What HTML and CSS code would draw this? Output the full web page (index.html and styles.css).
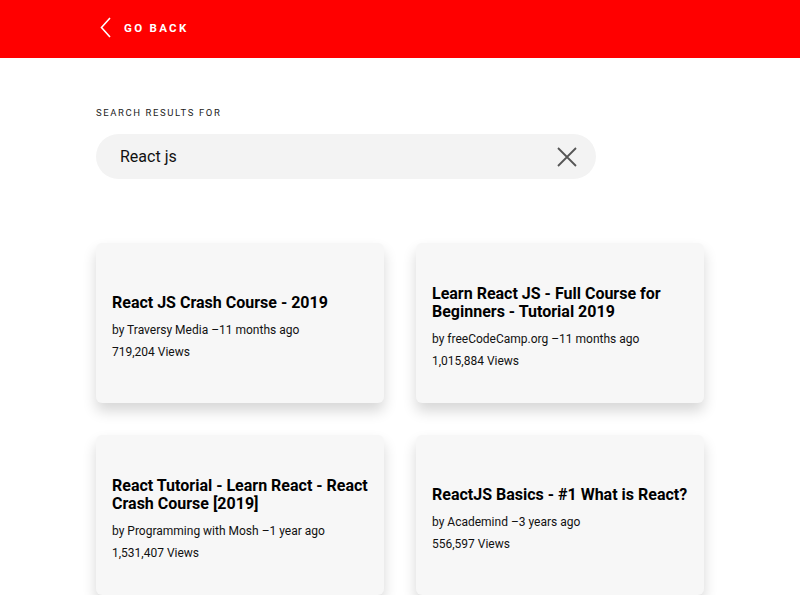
FILE: index.html
```html
<!DOCTYPE html>
<html>
<head>
<meta charset="utf-8">
<link rel="stylesheet" href="styles.css">
</head>
<body>
<header class="topbar">
  <a class="back" href="#">
    <svg class="chev" width="12" height="22" viewBox="0 0 12 22"><path d="M10 1 L1.5 10.5 L10 20" fill="none" stroke="#fff" stroke-width="1.6"/></svg>
    <span>GO BACK</span>
  </a>
</header>
<main class="content">
  <div class="label">SEARCH RESULTS FOR</div>
  <div class="search">
    <span class="query">React js</span>
    <svg class="clear" width="22" height="22" viewBox="0 0 22 22"><path d="M2 2 L20 20 M20 2 L2 20" stroke="#555" stroke-width="1.8" fill="none"/></svg>
  </div>
  <div class="grid">
    <div class="card">
      <div class="title">React JS Crash Course - 2019</div>
      <div class="meta">by Traversy Media –11 months ago</div>
      <div class="meta">719,204 Views</div>
    </div>
    <div class="card">
      <div class="title">Learn React JS - Full Course for Beginners - Tutorial 2019</div>
      <div class="meta">by freeCodeCamp.org –11 months ago</div>
      <div class="meta">1,015,884 Views</div>
    </div>
    <div class="card">
      <div class="title">React Tutorial - Learn React - React Crash Course [2019]</div>
      <div class="meta">by Programming with Mosh –1 year ago</div>
      <div class="meta">1,531,407 Views</div>
    </div>
    <div class="card">
      <div class="title">ReactJS Basics - #1 What is React?</div>
      <div class="meta">by Academind –3 years ago</div>
      <div class="meta">556,597 Views</div>
    </div>
  </div>
</main>
</body>
</html>
```
FILE: styles.css
```css
* { box-sizing: border-box; }
html, body { margin: 0; padding: 0; }
body {
  font-family: Roboto, "Liberation Sans", sans-serif;
  color: #111;
  background: #fff;
  overflow: hidden;
}
.topbar {
  background: #ff0000;
  height: 58px;
  display: flex;
  align-items: center;
  padding-left: 100px;
  padding-bottom: 2px;
}
.back {
  display: flex;
  align-items: center;
  color: #fff;
  text-decoration: none;
  font-weight: 700;
  font-size: 11.5px;
  letter-spacing: 2.3px;
}
.chev { margin-right: 12px; }
.content {
  padding: 49px 96px 0 96px;
}
.label {
  font-size: 9.5px;
  letter-spacing: 1.6px;
  color: #222;
  line-height: 12px;
}
.search {
  margin-top: 15px;
  width: 500px;
  height: 45px;
  border-radius: 23px;
  background: #f3f3f3;
  display: flex;
  align-items: center;
  justify-content: space-between;
  padding: 0 18px 0 24px;
}
.query { font-size: 16px; color: #111; }
.clear { display: block; }
.grid {
  margin-top: 64px;
  display: grid;
  grid-template-columns: 288px 288px;
  column-gap: 32px;
  row-gap: 32px;
}
.card {
  height: 160px;
  background: #f7f7f7;
  border-radius: 6px;
  box-shadow: 0 8px 14px rgba(0,0,0,0.16);
  padding: 10px 16px 0 16px;
  display: flex;
  flex-direction: column;
  justify-content: center;
}
.title {
  font-size: 16px;
  font-weight: 700;
  line-height: 18px;
  margin-bottom: 7px;
  color: #000;
}
.meta {
  font-size: 12px;
  line-height: 22px;
  color: #111;
}
```
